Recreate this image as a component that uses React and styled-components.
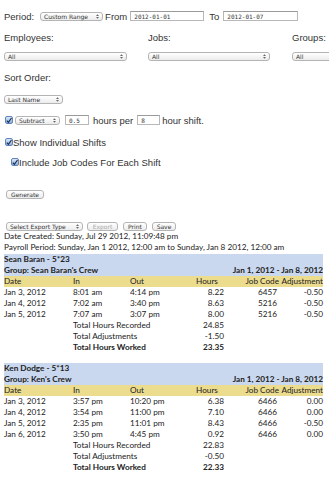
import React from 'react';
import styled, { createGlobalStyle } from 'styled-components';

const GlobalStyle = createGlobalStyle`
  html, body {
    margin: 0;
    padding: 0;
    overflow: hidden;
    background: #fff;
  }
  body {
    font-family: "Liberation Sans", Arial, sans-serif;
    color: #333;
  }
`

const Page = styled.div`
  box-sizing: border-box;
  padding-left: 4px;
  width: 329px;
  overflow: hidden;
`

const Row = styled.div`
  display: flex;
  align-items: center;
  height: ${p => p.h || 12}px;
  margin-top: ${p => p.mt || 0}px;
  margin-left: ${p => p.ml || 0}px;
  font-size: 9.5px;
  white-space: nowrap;
`

const Label = styled.span`
  flex-shrink: 0;
  display: inline-block;
  width: ${p => (p.w ? p.w + 'px' : 'auto')};
  margin: 0 ${p => p.mr || 0}px 0 ${p => p.ml || 0}px;
`

const SelectBox = styled.div`
  position: relative;
  flex-shrink: 0;
  box-sizing: border-box;
  display: inline-flex;
  align-items: center;
  width: ${p => p.w}px;
  height: 9px;
  margin-right: ${p => p.mr || 0}px;
  padding: 0 8px 0 3px;
  border: 1px solid #b4b4b4;
  border-radius: 3px;
  background: linear-gradient(#ffffff, #ececec);
  font-family: "DejaVu Sans", sans-serif;
  font-size: 6px;
  color: #333;
`

const Arrows = styled.svg`
  position: absolute;
  right: 3px;
  top: 1.5px;
`

const TextInput = styled.div`
  flex-shrink: 0;
  box-sizing: border-box;
  display: inline-flex;
  align-items: center;
  width: ${p => p.w}px;
  height: 10px;
  margin: 0 ${p => p.mr || 0}px 0 ${p => p.ml || 0}px;
  padding-left: 3px;
  border: 1px solid #b8b8b8;
  border-top-color: #9a9a9a;
  background: #fff;
  font-family: "DejaVu Sans Mono", monospace;
  font-size: 6px;
  color: #333;
`

const Button = styled.div`
  flex-shrink: 0;
  box-sizing: border-box;
  display: inline-flex;
  align-items: center;
  justify-content: center;
  width: ${p => p.w}px;
  height: 9px;
  margin-right: ${p => p.mr || 0}px;
  border: 1px solid #b4b4b4;
  border-radius: 3px;
  background: linear-gradient(#ffffff, #ececec);
  font-family: "DejaVu Sans", sans-serif;
  font-size: 6px;
  color: ${p => (p.disabled ? '#aaa' : '#333')};
`

const Check = styled.span`
  flex-shrink: 0;
  box-sizing: border-box;
  display: inline-flex;
  align-items: center;
  justify-content: center;
  width: 8px;
  height: 8px;
  margin-right: ${p => p.mr || 0}px;
  border: 1px solid #5d84bd;
  border-radius: 2px;
  background: linear-gradient(#dce8f7, #8db0df);
`

const Info = styled.div`
  font-family: Lato, "Open Sans", sans-serif;
  font-size: 8.2px;
  line-height: 10.5px;
  color: #222;
  white-space: nowrap;
`

const Report = styled.div`
  width: 319px;
  margin-top: ${p => p.mt || 0}px;
  font-family: Lato, "Open Sans", sans-serif;
  font-size: 8.2px;
  color: #222;
`

const GRow = styled.div`
  display: grid;
  grid-template-columns: 69px 57px 60px 34px 55px 44px;
  height: ${p => p.h || 11}px;
  line-height: ${p => p.h || 11}px;
  background: ${p => (p.band === 'blue' ? '#c9d8ef' : p.band === 'yellow' ? '#ecdc8e' : 'transparent')};
  font-weight: ${p => (p.bold ? 700 : 400)};
  white-space: nowrap;
`

const Cell = styled.div`
  text-align: ${p => p.align || 'left'};
  grid-column: ${p => p.span || 'auto'};
  padding-right: ${p => p.pr || 0}px;
  padding-left: ${p => p.pl || 0}px;
`

function Select({ w, mr, children }) {
  return (
    <SelectBox w={w} mr={mr}>
      {children}
      <Arrows width="3" height="5" viewBox="0 0 3 5">
        <path d="M0 2 L1.5 0.3 L3 2 Z M0 3 L1.5 4.7 L3 3 Z" fill="#666" />
      </Arrows>
    </SelectBox>
  );
}

function CheckBox({ mr }) {
  return (
    <Check mr={mr}>
      <svg width="7" height="7" viewBox="0 0 7 7">
        <path d="M1 3.6 L2.8 5.6 L6.4 0.6" stroke="#1c2c55" strokeWidth="1.4" fill="none" />
      </svg>
    </Check>
  );
}

const reports = [
  {
    name: 'Sean Baran - 5*23',
    group: "Group: Sean Baran's Crew",
    shifts: [
      ['Jan 3, 2012', '8:01 am', '4:14 pm', '8.22', '6457', '-0.50'],
      ['Jan 4, 2012', '7:02 am', '3:40 pm', '8.63', '5216', '-0.50'],
      ['Jan 5, 2012', '7:07 am', '3:07 pm', '8.00', '5216', '-0.50'],
    ],
    recorded: '24.85',
    adjust: '-1.50',
    worked: '23.35',
  },
  {
    name: 'Ken Dodge - 5*13',
    group: "Group: Ken's Crew",
    shifts: [
      ['Jan 3, 2012', '3:57 pm', '10:20 pm', '6.38', '6466', '0.00'],
      ['Jan 4, 2012', '3:54 pm', '11:00 pm', '7.10', '6466', '0.00'],
      ['Jan 5, 2012', '2:35 pm', '11:01 pm', '8.43', '6466', '-0.50'],
      ['Jan 6, 2012', '3:50 pm', '4:45 pm', '0.92', '6466', '0.00'],
    ],
    recorded: '22.83',
    adjust: '-0.50',
    worked: '22.33',
  },
];

function EmployeeReport({ data, mt }) {
  return (
    <Report mt={mt}>
      <GRow band="blue" bold>
        <Cell span="1 / 7">{data.name}</Cell>
      </GRow>
      <GRow band="blue" bold>
        <Cell span="1 / 4">{data.group}</Cell>
        <Cell span="4 / 7" align="right">Jan 1, 2012 - Jan 8, 2012</Cell>
      </GRow>
      <GRow band="yellow">
        <Cell>Date</Cell>
        <Cell>In</Cell>
        <Cell>Out</Cell>
        <Cell align="center">Hours</Cell>
        <Cell align="right">Job Code</Cell>
        <Cell align="right">Adjustment</Cell>
      </GRow>
      {data.shifts.map((s, i) => (
        <GRow key={i}>
          <Cell>{s[0]}</Cell>
          <Cell>{s[1]}</Cell>
          <Cell>{s[2]}</Cell>
          <Cell align="right">{s[3]}</Cell>
          <Cell align="right" pr={2}>{s[4]}</Cell>
          <Cell align="right">{s[5]}</Cell>
        </GRow>
      ))}
      <GRow>
        <Cell span="2 / 4">Total Hours Recorded</Cell>
        <Cell align="right">{data.recorded}</Cell>
      </GRow>
      <GRow>
        <Cell span="2 / 4">Total Adjustments</Cell>
        <Cell align="right">{data.adjust}</Cell>
      </GRow>
      <GRow bold>
        <Cell span="2 / 4">Total Hours Worked</Cell>
        <Cell align="right">{data.worked}</Cell>
      </GRow>
    </Report>
  );
}

export default function App() {
  return (
    <>
      <GlobalStyle />
      <Page>
        <Row mt={10}>
          <Label mr={6}>Period:</Label>
          <Select w={63} mr={2}>Custom Range</Select>
          <Label mr={3}>From</Label>
          <TextInput w={74}>2012-01-01</TextInput>
          <Label ml={5} mr={4}>To</Label>
          <TextInput w={75}>2012-01-07</TextInput>
        </Row>
        <Row mt={9.5}>
          <Label w={144}>Employees:</Label>
          <Label w={144}>Jobs:</Label>
          <Label>Groups:</Label>
        </Row>
        <Row h={10} mt={7.5}>
          <Select w={123} mr={21}>All</Select>
          <Select w={122} mr={22}>All</Select>
          <Select w={122}>All</Select>
        </Row>
        <Row mt={10}>
          <Label>Sort Order:</Label>
        </Row>
        <Row h={10} mt={11}>
          <Select w={59}>Last Name</Select>
        </Row>
        <Row mt={10} ml={1}>
          <CheckBox mr={2} />
          <Select w={45} mr={5}>Subtract</Select>
          <TextInput w={24} mr={4}>0.5</TextInput>
          <Label mr={4}>hours per</Label>
          <TextInput w={23} mr={2}>8</TextInput>
          <Label>hour shift.</Label>
        </Row>
        <Row mt={10} ml={1}>
          <CheckBox />
          <Label>Show Individual Shifts</Label>
        </Row>
        <Row mt={8} ml={7}>
          <CheckBox />
          <Label>Include Job Codes For Each Shift</Label>
        </Row>
        <Row h={10} mt={21} ml={2}>
          <Button w={38}>Generate</Button>
        </Row>
        <Row h={10} mt={22} ml={2}>
          <Select w={77} mr={4}>Select Export Type</Select>
          <Button w={31} mr={5} disabled>Export</Button>
          <Button w={24} mr={5}>Print</Button>
          <Button w={24}>Save</Button>
        </Row>
        <Info>Date Created: Sunday, Jul 29 2012, 11:09:48 pm</Info>
        <Info>Payroll Period: Sunday, Jan 1 2012, 12:00 am to Sunday, Jan 8 2012, 12:00 am</Info>
        <EmployeeReport data={reports[0]} mt={1.5} />
        <EmployeeReport data={reports[1]} mt={10} />
      </Page>
    </>
  );
}
